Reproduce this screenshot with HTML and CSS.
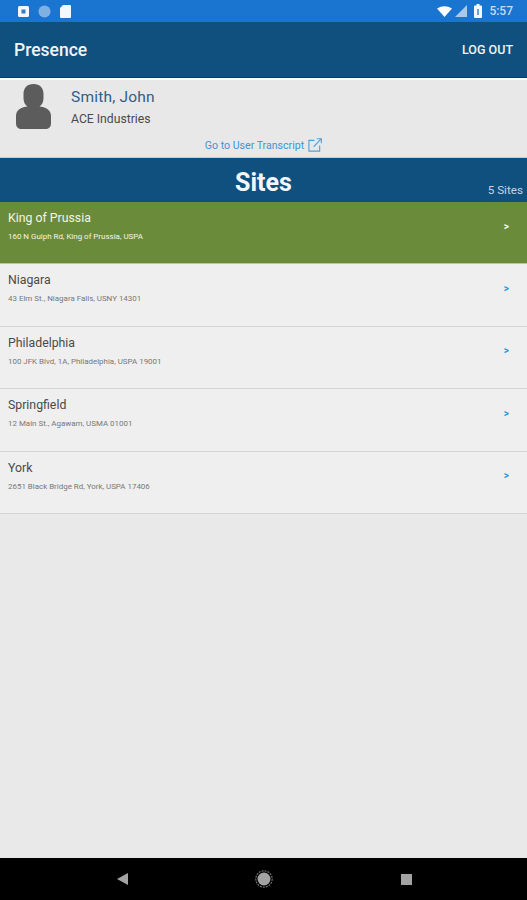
FILE: index.html
```html
<!DOCTYPE html>
<html lang="en">
<head>
  <meta charset="UTF-8">
  <meta name="viewport" content="width=device-width, initial-scale=1">
  <title>Presence</title>
  <link rel="stylesheet" href="styles.css">
</head>
<body>
  <div class="status-bar">
    <div class="status-left">
      <svg width="11" height="11" viewBox="0 0 11 11"><rect width="11" height="11" rx="1.5" fill="#f4f8fc"/><rect x="3.5" y="3.5" width="4" height="4" fill="#2f7fcf"/></svg>
      <svg width="13" height="13" viewBox="0 0 14 14"><circle cx="7" cy="7" r="6.5" fill="#7fb0e4"/></svg>
      <svg width="11" height="13" viewBox="0 0 11 13"><path d="M3 0H10a1 1 0 0 1 1 1V12a1 1 0 0 1-1 1H1a1 1 0 0 1-1-1V3Z" fill="#f4f8fc"/></svg>
    </div>
    <div class="status-right">
      <svg width="15" height="11" viewBox="0 0 15 11"><path d="M0 2.5Q7.500-2 15 2.500L7.500 11Z" fill="#fff"/></svg>
      <svg class="signal" width="12" height="12" viewBox="0 0 12 12"><path d="M12 0V12H0Z" fill="#a9c9ec"/></svg>
      <svg class="battery" width="8" height="14" viewBox="0 0 8 14"><path d="M2.500 0H5.500V1.500H7a1 1 0 0 1 1 1V13a1 1 0 0 1-1 1H1a1 1 0 0 1-1-1V2.500a1 1 0 0 1 1-1H2.500Z" fill="#f4f8fc"/><rect x="3.300" y="5" width="1.400" height="6" fill="#2f7fcf"/></svg>
      <span class="clock">5:57</span>
    </div>
  </div>

  <header class="app-bar">
    <span class="app-title">Presence</span>
    <span class="logout">LOG OUT</span>
  </header>

  <section class="profile">
    <div class="profile-row">
      <svg class="avatar" width="35" height="45" viewBox="0 0 35 45">
        <path d="M17.500 0C24 0 27.500 4 27.500 10V14C27.500 18 26 21 23.500 22.500C29 23 35 25.500 35 32V39C35 43 33 45 29 45H6C2 45 0 43 0 39V32C0 25.500 6 23 11.500 22.500C9 21 7.500 18 7.500 14V10C7.500 4 11 0 17.500 0Z" fill="#5c5c5c"/>
      </svg>
      <div class="profile-text">
        <div class="user-name">Smith, John</div>
        <div class="company">ACE Industries</div>
      </div>
    </div>
    <div class="transcript">
      <span>Go to User Transcript</span>
      <svg width="14" height="14" viewBox="0 0 15 15" fill="none" stroke="#4f9fdc" stroke-width="1.200"><path d="M7 2.500H1V14H12.500V8"/><path d="M6 9.500L14 1M9.500 .8H14.300V5.500"/></svg>
    </div>
  </section>

  <section class="sites-head">
    <h1>Sites</h1>
    <span class="site-count">5 Sites</span>
  </section>

  <ul class="site-list">
    <li class="site active">
      <div>
        <div class="site-name">King of Prussia</div>
        <div class="site-addr">160 N Gulph Rd, King of Prussia, USPA</div>
      </div>
      <span class="chevron">&gt;</span>
    </li>
    <li class="site">
      <div>
        <div class="site-name">Niagara</div>
        <div class="site-addr">43 Elm St., Niagara Falls, USNY 14301</div>
      </div>
      <span class="chevron">&gt;</span>
    </li>
    <li class="site">
      <div>
        <div class="site-name">Philadelphia</div>
        <div class="site-addr">100 JFK Blvd, 1A, Philadelphia, USPA 19001</div>
      </div>
      <span class="chevron">&gt;</span>
    </li>
    <li class="site">
      <div>
        <div class="site-name">Springfield</div>
        <div class="site-addr">12 Main St., Agawam, USMA 01001</div>
      </div>
      <span class="chevron">&gt;</span>
    </li>
    <li class="site">
      <div>
        <div class="site-name">York</div>
        <div class="site-addr">2651 Black Bridge Rd, York, USPA 17406</div>
      </div>
      <span class="chevron">&gt;</span>
    </li>
  </ul>

  <nav class="nav-bar">
    <svg width="11" height="12" viewBox="0 0 11 12"><path d="M11 0V12L0 6Z" fill="#a3a3a3"/></svg>
    <svg width="18" height="18" viewBox="0 0 18 18"><circle cx="9" cy="9" r="6.500" fill="#a3a3a3"/><circle cx="9" cy="9" r="8.200" fill="none" stroke="#6e6e6e" stroke-width="1.200" stroke-dasharray="2 1"/></svg>
    <svg width="11" height="11" viewBox="0 0 11 11"><rect width="11" height="11" fill="#a3a3a3"/></svg>
  </nav>
</body>
</html>
```

FILE: styles.css
```css
html, body {
  margin: 0;
  height: 900px;
  overflow: hidden;
}

body {
  display: flex;
  flex-direction: column;
  font-family: Roboto, "Liberation Sans", sans-serif;
  background: #e9e9e9;
  color: #333;
}

.status-bar {
  height: 22px;
  flex: none;
  background: #1a75d0;
  display: flex;
  justify-content: space-between;
  align-items: center;
  padding: 0 14px 0 18px;
}

.status-left, .status-right {
  display: flex;
  align-items: center;
}

.status-left {
  gap: 9px;
}

.signal {
  margin-left: 3px;
}

.battery {
  margin-left: 7px;
}

.clock {
  margin-left: 7px;
  font-size: 12px;
  font-weight: 500;
  color: #c6dbf3;
}

.app-bar {
  height: 56px;
  flex: none;
  box-sizing: border-box;
  background: #10507f;
  border-bottom: 1px solid #0b3a70;
  display: flex;
  justify-content: space-between;
  align-items: center;
  padding: 0 14px;
  color: #f0f4f8;
}

.app-title {
  font-size: 17.500px;
  font-weight: 500;
}

.logout {
  font-size: 12.500px;
  font-weight: 500;
  margin-top: -1px;
}

.profile {
  height: 80px;
  flex: none;
  box-sizing: border-box;
  border-top: 2px solid #fafafa;
  border-bottom: 1px solid #c4ccd2;
  background: #e8e8e8;
  display: flex;
  flex-direction: column;
}

.profile-row {
  display: flex;
  padding: 4px 0 0 16px;
  gap: 20px;
}

.profile-text {
  padding-top: 3px;
}

.user-name {
  font-size: 15.500px;
  line-height: 20px;
  letter-spacing: .2px;
  color: #2f5f8a;
}

.company {
  font-size: 12.200px;
  line-height: 16px;
  margin-top: 4px;
  color: #4a4a4a;
}

.transcript {
  display: flex;
  justify-content: center;
  align-items: center;
  gap: 4px;
  margin-top: 9px;
  font-size: 10.600px;
  color: #3f93d8;
}

.sites-head {
  height: 44px;
  flex: none;
  box-sizing: border-box;
  background: #10507f;
  position: relative;
  display: flex;
  justify-content: center;
  align-items: center;
  padding-top: 4px;
  color: #f4f7fa;
}

.sites-head h1 {
  margin: 0;
  font-size: 25px;
  font-weight: 700;
}

.site-count {
  position: absolute;
  right: 4px;
  bottom: 5px;
  font-size: 11.700px;
  color: #c6d5e1;
}

.site-list {
  list-style: none;
  margin: 0;
  padding: 0;
}

.site {
  height: 62.400px;
  box-sizing: border-box;
  background: #efefef;
  border-bottom: 1px solid #d4d4d4;
  display: flex;
  justify-content: space-between;
  padding: 8px 18px 0 8px;
}

.site.active {
  background: #6a8c3a;
  border-bottom-color: #b6c4a2;
  color: #f2f5ea;
}

.site-name {
  font-size: 12.300px;
  line-height: 16px;
  color: #4a4a4a;
}

.site-addr {
  font-size: 7.950px;
  line-height: 10px;
  margin-top: 6px;
  color: #777;
}

.active .site-name, .active .site-addr {
  color: #f2f5ea;
}

.chevron {
  font-size: 10px;
  font-weight: 700;
  line-height: 12px;
  margin-top: 10.500px;
  color: #2a9ad8;
}

.active .chevron {
  color: #f2f5ea;
}

.nav-bar {
  margin-top: auto;
  height: 42px;
  flex: none;
  background: #000;
  display: flex;
  align-items: center;
  justify-content: center;
  gap: 127.500px;
  padding-left: 1px;
}
```
